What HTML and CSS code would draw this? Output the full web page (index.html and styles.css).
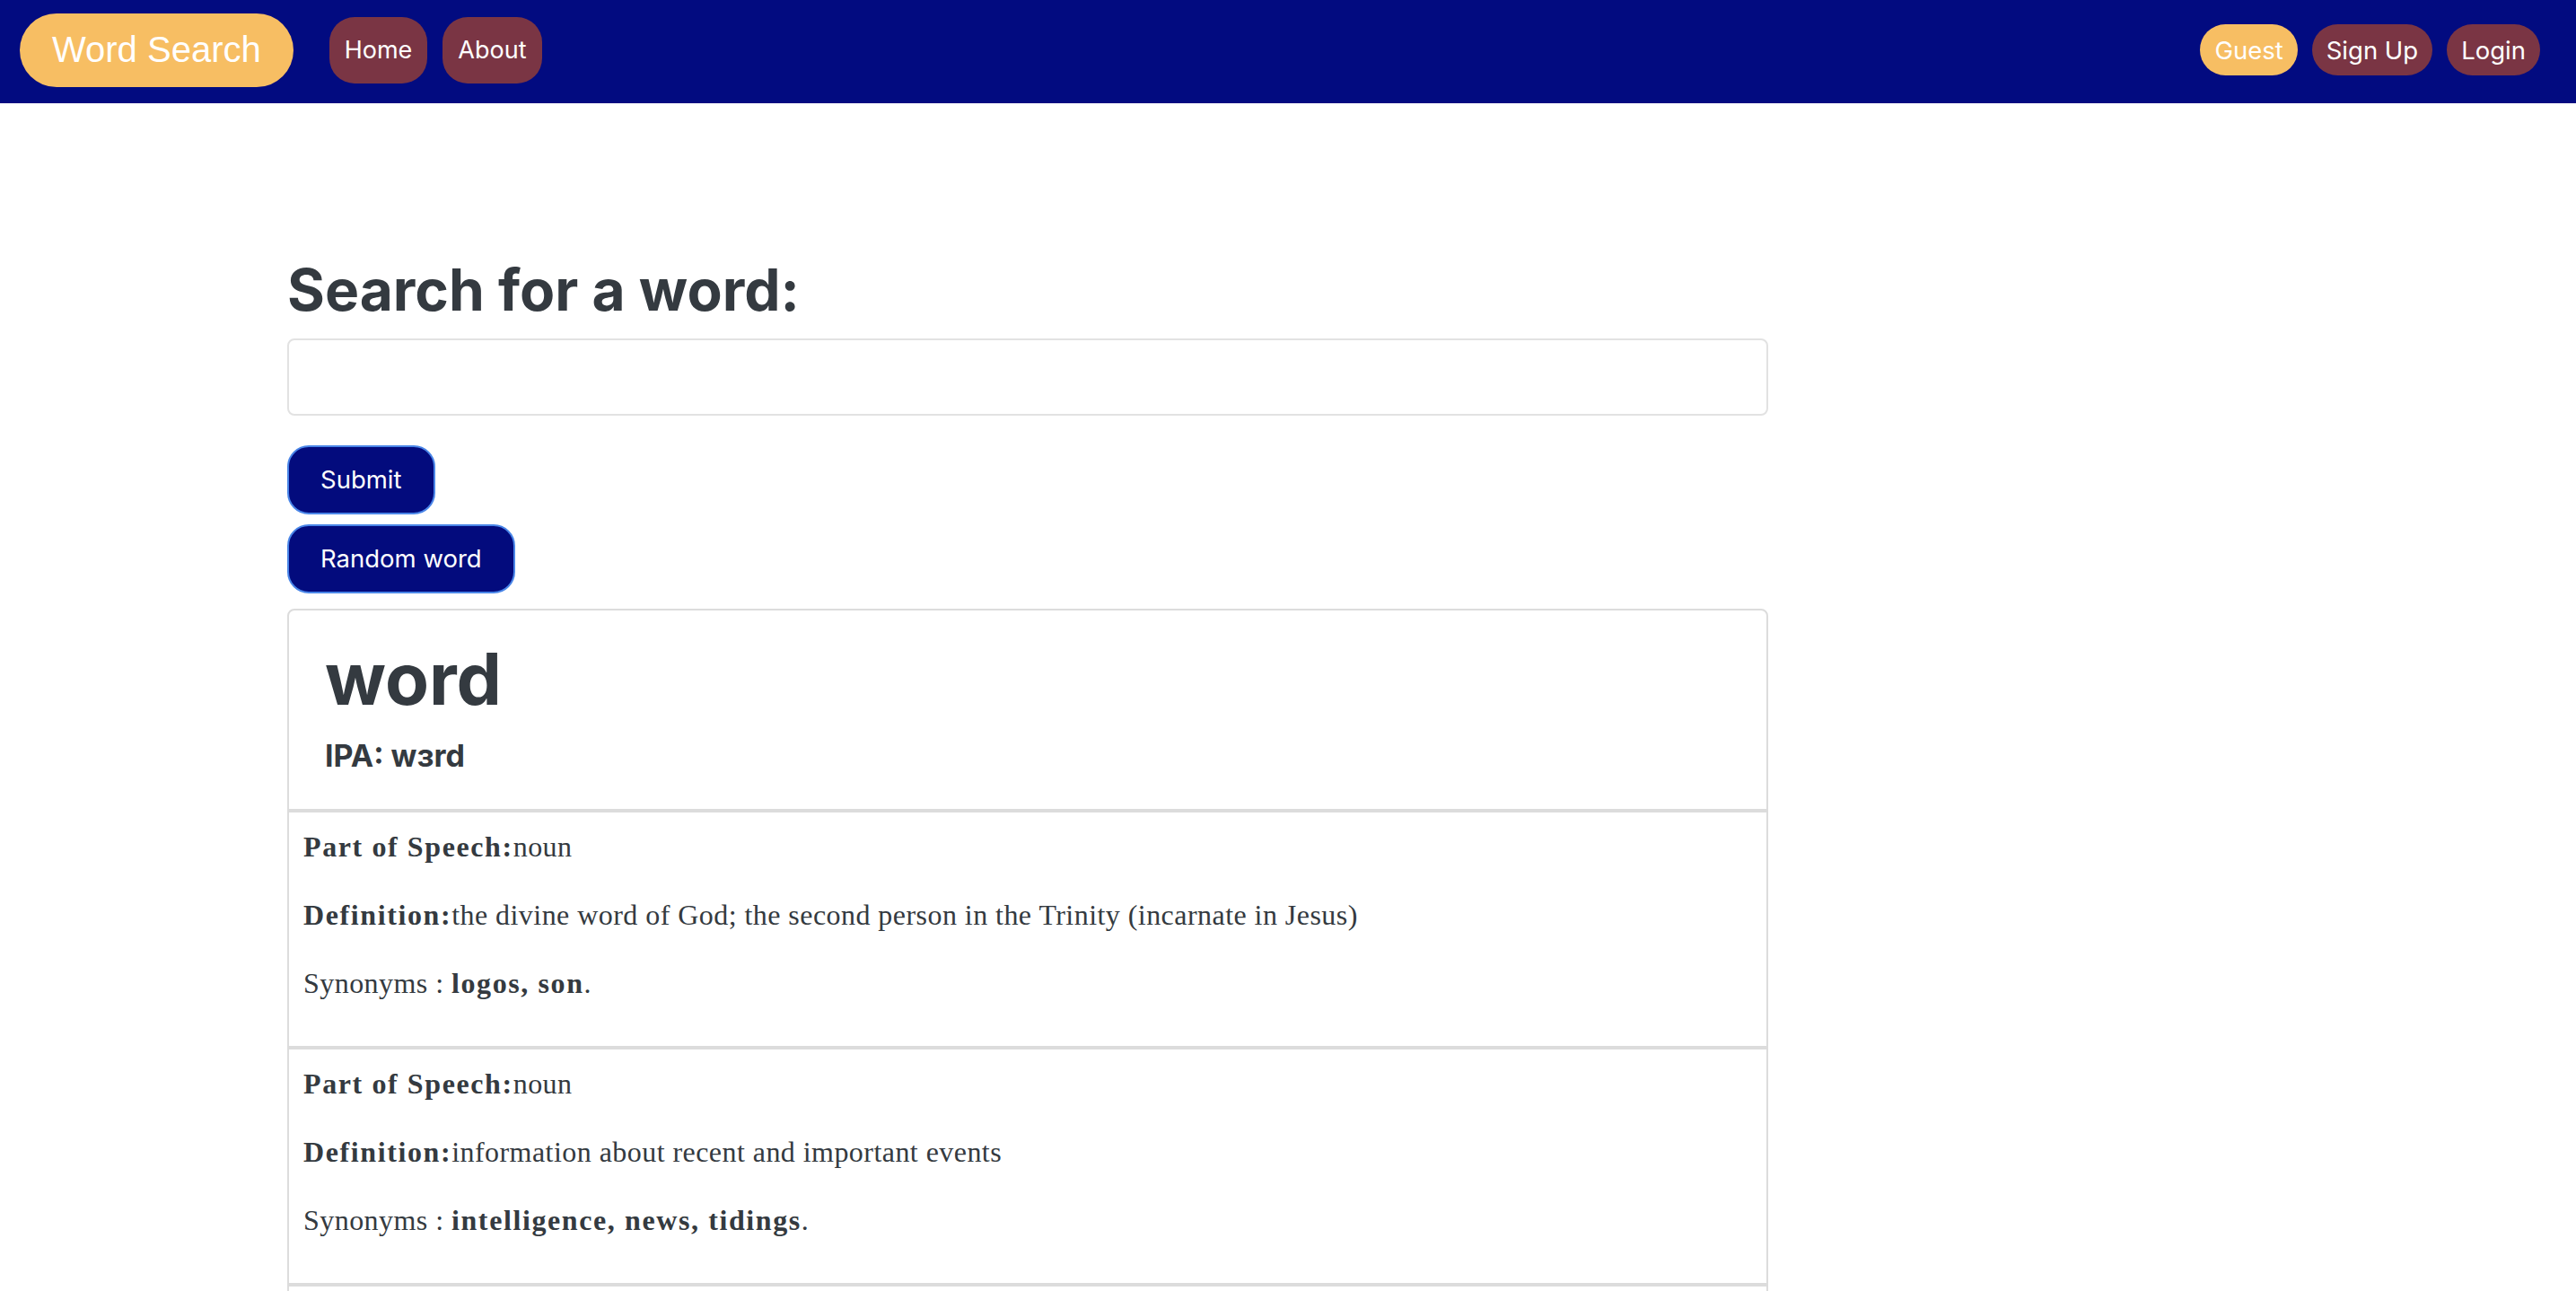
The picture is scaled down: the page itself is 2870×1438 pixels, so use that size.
FILE: index.html
```html
<!DOCTYPE html>
<html lang="en">
<head>
<meta charset="utf-8">
<title>Word Search</title>
<link rel="stylesheet" href="styles.css">
</head>
<body>
<header class="navbar">
  <nav class="nav-left">
    <a class="brand" href="#">Word Search</a>
    <a class="nav-btn" href="#">Home</a>
    <a class="nav-btn" href="#">About</a>
  </nav>
  <nav class="nav-right">
    <span class="pill pill-guest">Guest</span>
    <a class="pill pill-dark" href="#">Sign Up</a>
    <a class="pill pill-dark" href="#">Login</a>
  </nav>
</header>
<main class="page">
  <div class="content">
    <h2 class="title">Search for a word:</h2>
    <form class="search">
      <input class="search-input" type="text" aria-label="word">
      <button class="btn" type="button">Submit</button>
      <button class="btn" type="button">Random word</button>
    </form>
    <section class="card">
      <div class="card-head">
        <h1 class="word">word</h1>
        <h5 class="ipa">IPA: wɜrd</h5>
      </div>
      <ul class="senses">
        <li class="sense">
          <p><b>Part of Speech:</b>noun</p>
          <p><b>Definition:</b>the divine word of God; the second person in the Trinity (incarnate in Jesus)</p>
          <p>Synonyms : <b>logos, son</b>.</p>
        </li>
        <li class="sense">
          <p><b>Part of Speech:</b>noun</p>
          <p><b>Definition:</b>information about recent and important events</p>
          <p>Synonyms : <b>intelligence, news, tidings</b>.</p>
        </li>
        <li class="sense">
          <p><b>Part of Speech:</b>noun</p>
          <p><b>Definition:</b>a unit of language that native speakers can identify</p>
          <p>Synonyms : <b>word</b>.</p>
        </li>
      </ul>
    </section>
  </div>
</main>
</body>
</html>
```

FILE: styles.css
```css
html, body {
  margin: 0;
  padding: 0;
  background: #ffffff;
}

body {
  font-family: Inter, "Helvetica Neue", Arial, sans-serif;
  color: #343a40;
}

a {
  text-decoration: none;
}

.navbar {
  box-sizing: border-box;
  height: 115px;
  padding: 0 40px 4px 22px;
  background: #020b80;
  display: flex;
  align-items: center;
  justify-content: space-between;
}

.nav-left {
  display: flex;
  align-items: center;
  gap: 17px;
}

.brand {
  box-sizing: border-box;
  height: 82px;
  padding: 0 36px;
  margin-right: 23px;
  border-radius: 41px;
  background: #f7be63;
  color: #ffffff;
  font-family: "Liberation Sans", Arial, sans-serif;
  font-size: 40px;
  display: flex;
  align-items: center;
}

.nav-btn {
  box-sizing: border-box;
  height: 74px;
  padding: 0 17px;
  border-radius: 28px;
  background: #7a3544;
  color: #ffffff;
  font-size: 27px;
  display: flex;
  align-items: center;
}

.nav-right {
  display: flex;
  align-items: center;
  gap: 16px;
}

.pill {
  box-sizing: border-box;
  height: 57px;
  padding: 0 16px;
  border-radius: 29px;
  color: #ffffff;
  font-size: 27.5px;
  display: flex;
  align-items: center;
}

.pill-guest {
  background: #f7be63;
}

.pill-dark {
  background: #7a3544;
}

.page {
  padding: 170px 0 0 320px;
}

.content {
  width: 1650px;
}

.title {
  margin: 0 0 15px;
  font-size: 64px;
  font-weight: 700;
  line-height: 1.2;
  color: #343a40;
}

.search {
  display: flex;
  flex-direction: column;
  align-items: flex-start;
  margin: 0 0 17px;
}

.search-input {
  box-sizing: border-box;
  display: block;
  width: 100%;
  height: 86px;
  margin: 0 0 33px;
  border: 2px solid #e2e2e2;
  border-radius: 8px;
  background: #ffffff;
}

.btn {
  box-sizing: border-box;
  height: 77px;
  padding: 0 35px;
  margin: 0 0 11px;
  border: 2px solid #4a86e8;
  border-radius: 24px;
  background: #030b7d;
  color: #ffffff;
  font-family: Inter, "Helvetica Neue", Arial, sans-serif;
  font-size: 27.5px;
}

.btn:last-child {
  margin-bottom: 0;
}

.card {
  border: 2px solid #dcdcdc;
  border-radius: 8px;
}

.card-head {
  padding: 28px 40px 41px;
  border-bottom: 2px solid #dcdcdc;
}

.word {
  margin: 0 0 20px;
  font-size: 80px;
  font-weight: 700;
  line-height: 1.2;
  color: #343a40;
}

.ipa {
  margin: 0;
  font-size: 34px;
  font-weight: 700;
  line-height: 36px;
  color: #343a40;
}

.senses {
  list-style: none;
  margin: 0;
  padding: 0;
}

.sense {
  padding: 16px;
  border-top: 2px solid #dcdcdc;
  border-bottom: 2px solid #dcdcdc;
  font-family: Georgia, "Liberation Serif", serif;
  font-size: 32px;
  line-height: 44px;
  letter-spacing: 0.45px;
  color: #343a40;
}

.sense p {
  margin: 0 0 32px;
}

.sense b {
  letter-spacing: 1.6px;
}
```
